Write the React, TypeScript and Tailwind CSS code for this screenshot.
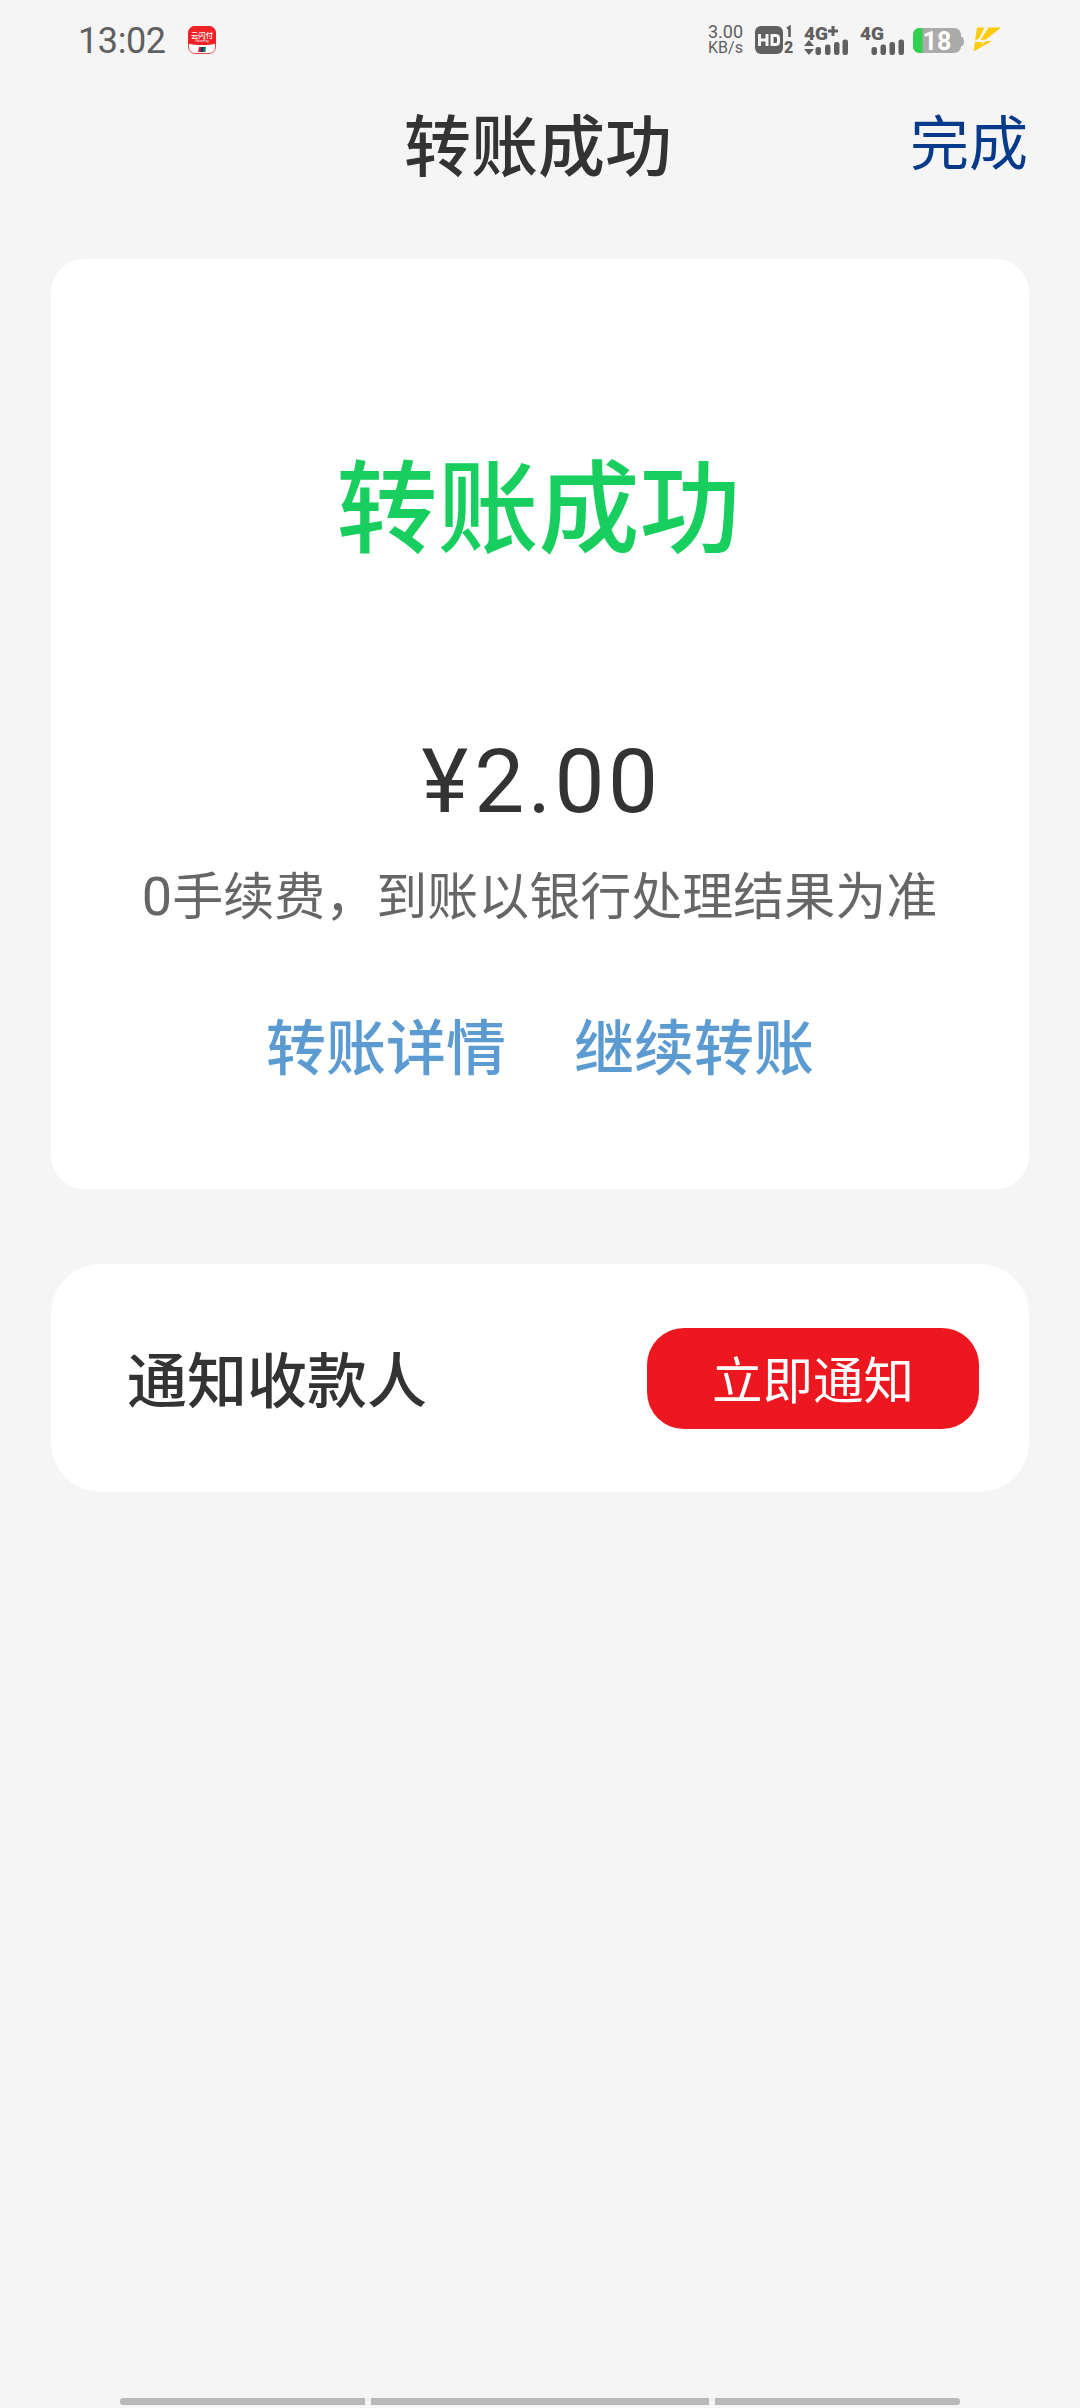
import React from "react";

const AppBadge = () => (
  <svg className="ml-[22px] h-7 w-7" viewBox="0 0 28 28">
    <rect x="0.5" y="0.5" width="27" height="27" rx="6.5" fill="#fff" stroke="#e8474b" />
    <path d="M0 17.5V7a7 7 0 0 1 7-7h14a7 7 0 0 1 7 7v10.5c-7 2-21 2-28 0z" fill="#ee2226" />
    <text x="14" y="11.5" textAnchor="middle" fontSize="7.4" fontWeight="500" fill="#fff">
      云闪付
    </text>
    <text x="14" y="16.3" textAnchor="middle" fontSize="3.2" fill="#fff">
      UnionPay
    </text>
    <path d="M11 21h3.4l-1 5H10z" fill="#c3283a" />
    <path d="M13.4 21h3l-1 5h-3z" fill="#23365c" />
    <path d="M15.6 21h2.4l-.6 5h-2.600z" fill="#127c6c" />
  </svg>
);

const HdIcon = () => (
  <svg className="ml-3 h-8 w-10" viewBox="0 0 40 32">
    <rect x="0" y="2" width="28" height="28" rx="6" fill="#606060" />
    <path
      d="M4.5 10v12M12 10v12M4.5 16H12M17 11.5v9h3.5q3 0 3-2.5v-4q0-2.5-3-2.5z"
      fill="none"
      stroke="#f5f5f5"
      strokeWidth="3"
    />
    <path d="M32 4.5 34.5 3v10" fill="none" stroke="#606060" strokeWidth="2.6" />
    <text x="29" y="29" fontSize="16" fontWeight="900" fill="#606060">
      2
    </text>
  </svg>
);

const SignalPlus = () => (
  <svg className="ml-[9px] h-8 w-[46px] overflow-visible" viewBox="0 0 46 32" fill="#606060">
    <text x="0" y="15.5" fontSize="18.5" fontWeight="900" textLength="24" lengthAdjust="spacingAndGlyphs">
      4G
    </text>
    <path d="M24 5.5h3.5V2h3v3.5H34v3h-3.5V12h-3V8.500H24z" />
    <path d="M5 16 10 22H0zM5 31 10 25H0z" />
    <rect x="11.5" y="23" width="5.5" height="8" rx="2.3" />
    <rect x="21" y="20.5" width="5.5" height="10.5" rx="2.3" />
    <rect x="30" y="18" width="5.5" height="13" rx="2.3" />
    <rect x="38.5" y="15.5" width="5.5" height="15.5" rx="2.3" />
  </svg>
);

const Signal = () => (
  <svg className="ml-[10px] h-8 w-[46px] overflow-visible" viewBox="0 0 46 32" fill="#606060">
    <text x="0" y="15.5" fontSize="18.5" fontWeight="900" textLength="24" lengthAdjust="spacingAndGlyphs">
      4G
    </text>
    <rect x="11.5" y="23" width="5.5" height="8" rx="2.3" />
    <rect x="20.5" y="20.5" width="5.5" height="10.5" rx="2.3" />
    <rect x="29.5" y="18" width="5.5" height="13" rx="2.3" />
    <rect x="38.5" y="15.5" width="5.5" height="15.5" rx="2.3" />
  </svg>
);

const Battery = () => (
  <svg className="ml-[7px] h-8 w-[52px]" viewBox="0 0 52 32">
    <path d="M47 12.5q4 0 4 5t-4 5z" fill="#ababab" />
    <rect x="0" y="4" width="48" height="25" rx="6.5" fill="#ababab" />
    <path d="M9.5 4H6.5A6.5 6.5 0 0 0 0 10.5v12A6.5 6.5 0 0 0 6.5 29h3z" fill="#2fd24c" />
    <text x="24" y="26" textAnchor="middle" fontSize="25" fontWeight="700" fill="#fff">
      18
    </text>
  </svg>
);

const Bolt = () => (
  <svg className="ml-2 h-8 w-7" viewBox="0 0 28 32" fill="#fccb0a">
    <path d="M4 3.500h7.500L6.500 14 2 17z" />
    <path d="M15.500 3.500H28L13 15.500 7.500 16z" />
    <path d="M2 18h8L6.500 22.500 13 17h6L.5 27.500z" />
  </svg>
);

const StatusBar = () => (
  <div className="flex h-[82px] items-start pl-[78px] pt-6 text-[#606060]">
    <span className="pt-px text-[36px] leading-8 tracking-[-0.4px]">13:02</span>
    <div className="pt-0.5">
      <AppBadge />
    </div>
    <div className="ml-auto mr-[79px] flex items-start">
      <div className="w-[35px] text-center leading-4">
        <div className="text-[18px]">3.00</div>
        <div className="text-[16px]">KB/s</div>
      </div>
      <HdIcon />
      <SignalPlus />
      <Signal />
      <Battery />
      <Bolt />
    </div>
  </div>
);

const Header = () => (
  <header className="grid h-[177px] grid-cols-3 px-[51px] pt-[29px]">
    <h1 className="col-start-2 -ml-1 text-center text-[67px] leading-[74px] font-medium text-[#333333]">
      转账成功
    </h1>
    <button className="h-[68px] pr-px text-right text-[59px] leading-[66px] text-[#063a8a]">完成</button>
  </header>
);

const ResultCard = () => (
  <section className="mx-[51px] flex h-[930px] flex-col items-center rounded-[34px] bg-white">
    <p className="mt-[192px] mr-[3px] text-[101px] leading-[120px] font-medium text-[#17ce5e]">
      转账成功
    </p>
    <p className="mt-[161px] ml-[3px] flex text-[89px] leading-[100px] text-[#333333]">
      <span className="tracking-[6px]">¥</span>
      <span className="tracking-[3.4px]">2.00</span>
    </p>
    <p className="mt-[35px] mr-px text-[51px] leading-[60px] whitespace-nowrap text-[#666666]">
      <span className="text-[54px]">0</span>手续费，到账以银行处理结果为准
    </p>
    <div className="mt-[87px] flex gap-[68px] text-[60px] leading-[70px] font-medium text-[#5b9bd1]">
      <a href="#">转账详情</a>
      <a href="#">继续转账</a>
    </div>
  </section>
);

const NotifyCard = () => (
  <section className="mx-[51px] mt-[75px] flex h-[228px] items-center justify-between rounded-[50px] bg-white pr-[50px] pl-[76px]">
    <span className="pt-2.5 text-[60px] leading-[70px] font-medium text-[#333333]">通知收款人</span>
    <button className="h-[101px] w-[332px] rounded-[37px] bg-[#ed171f] pt-1 text-[50.5px] leading-[99px] text-white">
      立即通知
    </button>
  </section>
);

const NavHandle = () => (
  <div className="mt-auto mb-[3px] flex h-[7px] gap-[6px] px-[120px]">
    <div className="w-[245px] rounded-l-[3px] bg-[#b9b9b9]" />
    <div className="w-[338px] bg-[#b9b9b9]" />
    <div className="w-[245px] rounded-r-[3px] bg-[#b9b9b9]" />
  </div>
);

export default function App() {
  return (
    <div className="flex h-[2408px] w-[1080px] flex-col overflow-hidden bg-[#f5f5f5] font-[Roboto,'Noto_Sans_CJK_SC',sans-serif]">
      <StatusBar />
      <Header />
      <ResultCard />
      <NotifyCard />
      <NavHandle />
    </div>
  );
}
